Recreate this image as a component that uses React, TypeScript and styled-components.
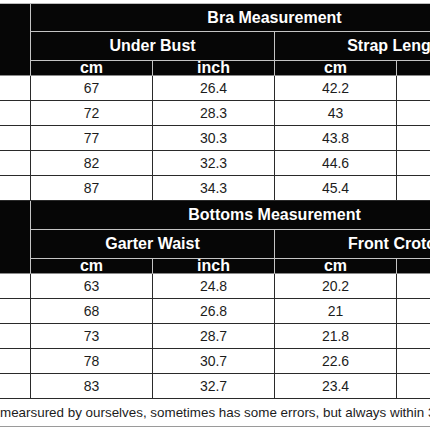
import React from 'react';
import styled, { createGlobalStyle } from 'styled-components';

const GlobalStyle = createGlobalStyle`
    html, body {
        margin: 0;
        padding: 0;
        background: #ffffff;
    }
    body {
        font-family: "Liberation Sans", Arial, sans-serif;
    }
`;

const Frame = styled.div`
    width: 430px;
    height: 430px;
    padding-top: 3px;
    box-sizing: border-box;
    overflow: hidden;
    background: #ffffff;
`;

const Sheet = styled.div`
    display: grid;
    grid-template-columns: 31px repeat(4, 122px);
    width: max-content;
    border-top: 1px solid #bdbdbd;
`;

const HeadCell = styled.div<{ $span?: number; $h: number; $last?: boolean }>`
    grid-column: span ${p => p.$span || 1};
    height: ${p => p.$h}px;
    box-sizing: border-box;
    background: #060606;
    color: #ffffff;
    font-weight: bold;
    font-size: 16px;
    line-height: 14px;
    display: flex;
    align-items: center;
    justify-content: center;
    white-space: nowrap;
    border-right: 1px solid #c4c4c4;
    border-bottom: 1px solid ${p => (p.$last ? '#8a8a8a' : '#c4c4c4')};
`;

const SizeCell = styled.div`
    grid-row: span 3;
    background: #060606;
    box-sizing: border-box;
    border-right: 1px solid #c4c4c4;
    border-bottom: 1px solid #8a8a8a;
`;

const DataCell = styled.div`
    height: 25px;
    box-sizing: border-box;
    display: flex;
    align-items: center;
    justify-content: center;
    font-size: 14px;
    color: #1c1c1c;
    border-right: 1px solid #2a2a2a;
    border-bottom: 1px solid #2a2a2a;
`;

const NoteCell = styled.div`
    grid-column: 1 / -1;
    height: 28px;
    box-sizing: border-box;
    display: flex;
    align-items: center;
    font-size: 13.4px;
    color: #1c1c1c;
    white-space: nowrap;
    border-bottom: 1px solid #9a9a9a;
`;

type Section = {
    title: string;
    titleHeight: number;
    groups: string[];
    rows: string[][];
};

const sections: Section[] = [
    {
        title: 'Bra Measurement',
        titleHeight: 28,
        groups: ['Under Bust', 'Strap Length'],
        rows: [
            ['67', '26.4', '42.2', '16.6'],
            ['72', '28.3', '43', '16.9'],
            ['77', '30.3', '43.8', '17.2'],
            ['82', '32.3', '44.6', '17.6'],
            ['87', '34.3', '45.4', '17.9'],
        ],
    },
    {
        title: 'Bottoms Measurement',
        titleHeight: 29,
        groups: ['Garter Waist', 'Front Crotch'],
        rows: [
            ['63', '24.8', '20.2', '8.0'],
            ['68', '26.8', '21', '8.3'],
            ['73', '28.7', '21.8', '8.6'],
            ['78', '30.7', '22.6', '8.9'],
            ['83', '32.7', '23.4', '9.2'],
        ],
    },
];

const App: React.FC = () => {
    return (
        <Frame>
            <GlobalStyle />
            <Sheet>
                {sections.map(section => (
                    <React.Fragment key={section.title}>
                        <SizeCell />
                        <HeadCell $span={4} $h={section.titleHeight}>{section.title}</HeadCell>
                        {section.groups.map(g => (
                            <HeadCell key={g} $span={2} $h={29}>{g}</HeadCell>
                        ))}
                        {['cm', 'inch', 'cm', 'inch'].map((u, i) => (
                            <HeadCell key={i} $h={15} $last>{u}</HeadCell>
                        ))}
                        {section.rows.map((row, r) => (
                            <React.Fragment key={r}>
                                <DataCell />
                                {row.map((v, c) => (
                                    <DataCell key={c}>{v}</DataCell>
                                ))}
                            </React.Fragment>
                        ))}
                    </React.Fragment>
                ))}
                <NoteCell>mearsured by ourselves, sometimes has some errors, but always within 3cm.</NoteCell>
            </Sheet>
        </Frame>
    );
};

export default App;
